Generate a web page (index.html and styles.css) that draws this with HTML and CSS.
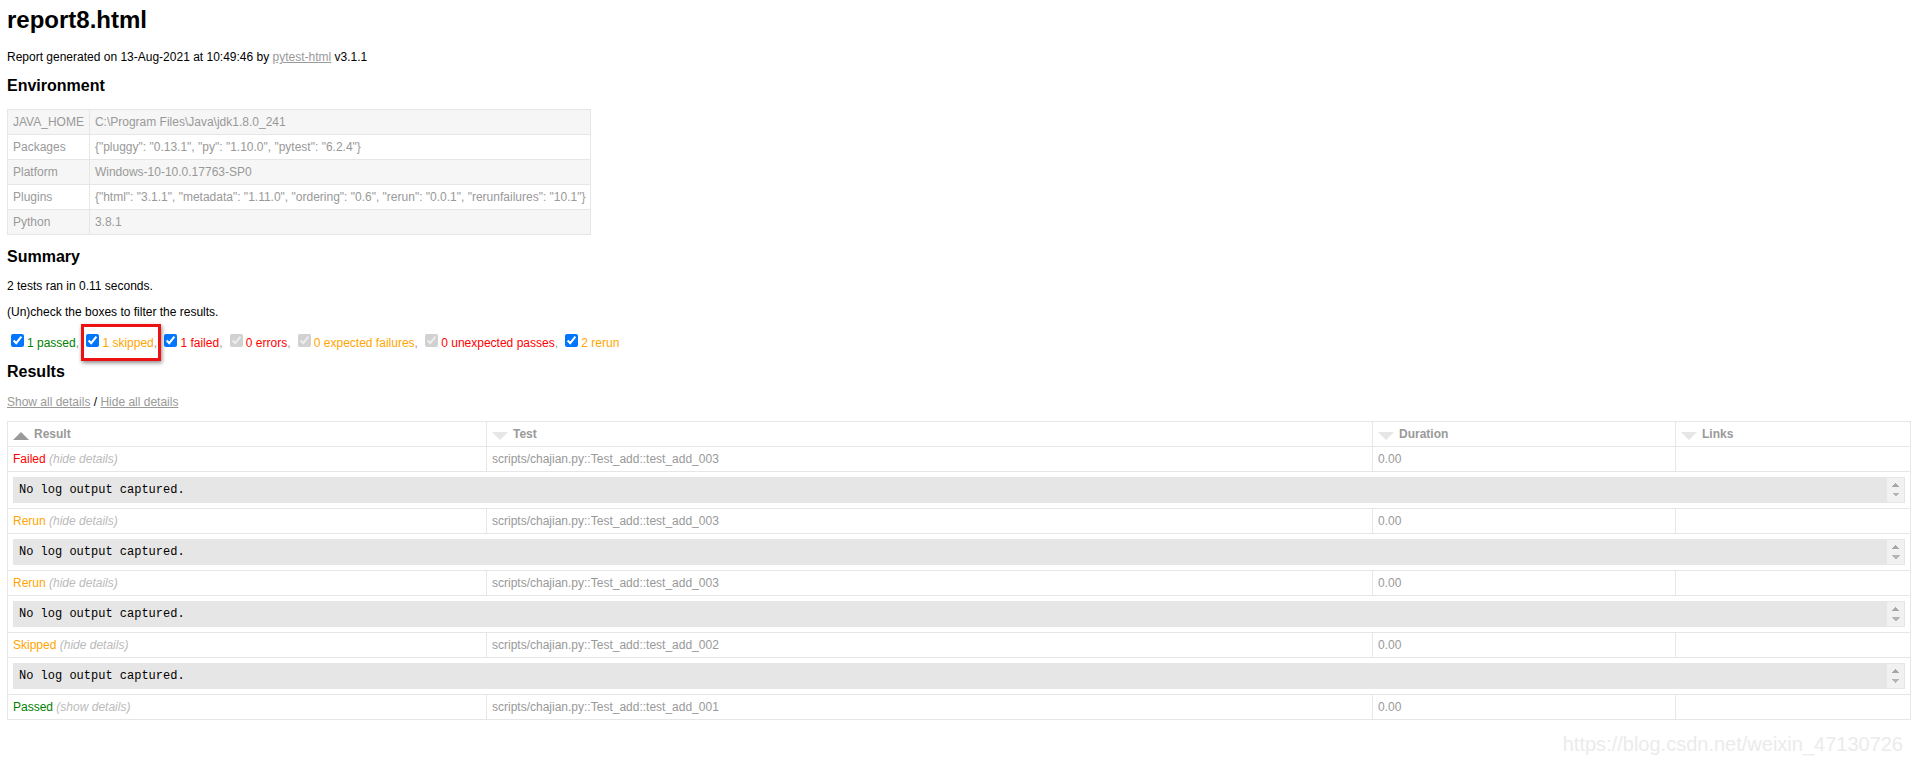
FILE: index.html
```html
<!DOCTYPE html>
<html>
  <head>
    <meta charset="utf-8"/>
    <title>Test Report</title>
    <link rel="stylesheet" href="styles.css">
  </head>
  <body>
    <h1>report8.html</h1>
    <p>Report generated on 13-Aug-2021 at 10:49:46 by <a href="#">pytest-html</a> v3.1.1</p>

    <h2>Environment</h2>
    <table id="environment">
      <tr><td>JAVA_HOME</td><td>C:\Program Files\Java\jdk1.8.0_241</td></tr>
      <tr><td>Packages</td><td>{"pluggy": "0.13.1", "py": "1.10.0", "pytest": "6.2.4"}</td></tr>
      <tr><td>Platform</td><td>Windows-10-10.0.17763-SP0</td></tr>
      <tr><td>Plugins</td><td>{"html": "3.1.1", "metadata": "1.11.0", "ordering": "0.6", "rerun": "0.0.1", "rerunfailures": "10.1"}</td></tr>
      <tr><td>Python</td><td>3.8.1</td></tr>
    </table>

    <h2>Summary</h2>
    <p>2 tests ran in 0.11 seconds. </p>
    <p class="filter">(Un)check the boxes to filter the results.</p>
    <div class="filters">
      <input checked type="checkbox" class="filter"/><span class="passed">1 passed</span>,
      <span class="mark"><input checked type="checkbox" class="filter"/><span class="skipped">1 skipped</span>,</span>
      <input checked type="checkbox" class="filter"/><span class="failed">1 failed</span>,
      <input checked disabled type="checkbox" class="filter"/><span class="error">0 errors</span>,
      <input checked disabled type="checkbox" class="filter"/><span class="xfailed">0 expected failures</span>,
      <input checked disabled type="checkbox" class="filter"/><span class="xpassed">0 unexpected passes</span>,
      <input checked type="checkbox" class="filter"/><span class="rerun">2 rerun</span>
    </div>

    <h2>Results</h2>
    <p><a href="#">Show all details</a> / <a href="#">Hide all details</a></p>
    <table id="results-table">
      <thead>
        <tr>
          <th class="sortable result asc active"><div class="sort-icon"></div>Result</th>
          <th class="sortable name inactive"><div class="sort-icon"></div>Test</th>
          <th class="sortable duration inactive"><div class="sort-icon"></div>Duration</th>
          <th class="sortable links inactive"><div class="sort-icon"></div>Links</th>
        </tr>
      </thead>
      <tbody class="failed">
        <tr>
          <td class="col-result collapser">Failed</td>
          <td class="col-name">scripts/chajian.py::Test_add::test_add_003</td>
          <td class="col-duration">0.00</td>
          <td class="col-links"></td>
        </tr>
        <tr>
          <td class="extra" colspan="4"><div class="log">No log output captured.</div></td>
        </tr>
      </tbody>
      <tbody class="rerun">
        <tr>
          <td class="col-result collapser">Rerun</td>
          <td class="col-name">scripts/chajian.py::Test_add::test_add_003</td>
          <td class="col-duration">0.00</td>
          <td class="col-links"></td>
        </tr>
        <tr>
          <td class="extra" colspan="4"><div class="log">No log output captured.</div></td>
        </tr>
      </tbody>
      <tbody class="rerun">
        <tr>
          <td class="col-result collapser">Rerun</td>
          <td class="col-name">scripts/chajian.py::Test_add::test_add_003</td>
          <td class="col-duration">0.00</td>
          <td class="col-links"></td>
        </tr>
        <tr>
          <td class="extra" colspan="4"><div class="log">No log output captured.</div></td>
        </tr>
      </tbody>
      <tbody class="skipped">
        <tr>
          <td class="col-result collapser">Skipped</td>
          <td class="col-name">scripts/chajian.py::Test_add::test_add_002</td>
          <td class="col-duration">0.00</td>
          <td class="col-links"></td>
        </tr>
        <tr>
          <td class="extra" colspan="4"><div class="log">No log output captured.</div></td>
        </tr>
      </tbody>
      <tbody class="passed">
        <tr>
          <td class="col-result expander">Passed</td>
          <td class="col-name">scripts/chajian.py::Test_add::test_add_001</td>
          <td class="col-duration">0.00</td>
          <td class="col-links"></td>
        </tr>
      </tbody>
    </table>

    <div class="watermark">https://blog.csdn.net/weixin_47130726</div>
  </body>
</html>
```

FILE: styles.css
```css
html {
  position: relative;
  min-height: 100%;
}

body {
  font-family: "Liberation Sans", Helvetica, Arial, sans-serif;
  font-size: 12px;
  min-width: 800px;
  margin: 0 2px 8px 7px;
  color: #999;
}

h1 {
  font-size: 24px;
  color: black;
  margin: 6px 0 16px;
}

h2 {
  font-size: 16px;
  color: black;
}

p {
  color: black;
}

a {
  color: #999;
}

table {
  border-collapse: collapse;
}

/* summary */

#environment td {
  padding: 5px;
  border: 1px solid #e6e6e6;
}

#environment tr:nth-child(odd) {
  background-color: #f6f6f6;
}

.filters input {
  margin: 3px 3px 3px 4px;
}

.mark {
  position: relative;
}

.mark::after {
  content: "";
  position: absolute;
  left: -1px;
  right: -4px;
  top: -12px;
  bottom: -11px;
  border: 3px solid #ee1111;
  box-shadow: 1px 2px 4px rgba(0, 0, 0, 0.45);
}

/* result colours */

span.passed, .passed .col-result {
  color: green;
}

span.skipped, span.xfailed, span.rerun, .skipped .col-result, .rerun .col-result {
  color: orange;
}

span.error, span.failed, span.xpassed, .failed .col-result {
  color: red;
}

/* results table */

#results-table {
  border: 1px solid #e6e6e6;
  color: #999;
  font-size: 12px;
  width: 100%;
}

#results-table th, #results-table td {
  padding: 5px;
  border: 1px solid #e6e6e6;
  text-align: left;
}

#results-table th {
  font-weight: bold;
}

th.result {
  width: 468px;
}

th.name {
  width: 875px;
}

th.duration {
  width: 292px;
}

/* log box, with the look of an empty scrollbar on its right edge */
.log {
  background-color: #e6e6e6;
  background-image:
    linear-gradient(to bottom right, transparent 50%, #a6a6a6 50%),
    linear-gradient(to bottom left, transparent 50%, #a6a6a6 50%),
    linear-gradient(to top right, transparent 50%, #b4b4b4 50%),
    linear-gradient(to top left, transparent 50%, #b4b4b4 50%),
    linear-gradient(#f1f1f1, #f1f1f1);
  background-size: 4px 4px, 4px 4px, 4px 4px, 4px 4px, 17px 100%;
  background-position:
    right 8px top 5px,
    right 4px top 5px,
    right 8px bottom 5px,
    right 4px bottom 5px,
    right top;
  background-repeat: no-repeat;
  border: 1px solid #e6e6e6;
  color: black;
  display: block;
  font-family: "Liberation Mono", "Courier New", Courier, monospace;
  height: inherit;
  overflow-y: auto;
  padding: 5px;
  white-space: pre-wrap;
}

.expander::after {
  content: " (show details)";
  color: #bbb;
  font-style: italic;
}

.collapser::after {
  content: " (hide details)";
  color: #bbb;
  font-style: italic;
}

.sortable {
  cursor: pointer;
}

.sort-icon {
  font-size: 0;
  float: left;
  margin-right: 5px;
  margin-top: 5px;
  width: 0;
  height: 0;
  border-left: 8px solid transparent;
  border-right: 8px solid transparent;
}

.inactive .sort-icon {
  border-top: 8px solid #e6e6e6;
}

.asc.active .sort-icon {
  border-bottom: 8px solid #999;
}

.watermark {
  position: absolute;
  right: 10px;
  bottom: 10px;
  font-size: 20px;
  color: #ebebeb;
}
```
